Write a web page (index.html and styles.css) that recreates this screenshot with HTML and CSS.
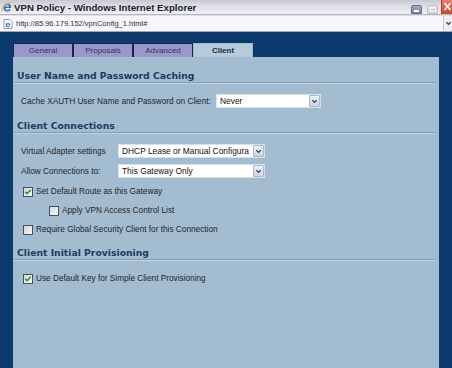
FILE: index.html
```html
<!DOCTYPE html>
<html>
<head>
<meta charset="utf-8">
<title>VPN Policy</title>
<link rel="stylesheet" href="styles.css">
</head>
<body>
<div class="window">
  <div class="titlebar">
    <svg class="ie-icon" viewBox="0 0 12 12">
      <path d="M10.2 7H4.3c.2 1.2 1 1.9 2.1 1.9.8 0 1.4-.3 1.9-.9l1.5.8c-.8 1.2-2 1.8-3.5 1.8-2.4 0-4-1.6-4-4S3.9 2.6 6.2 2.6s4 1.6 4 4zM4.4 5.6h3.7C7.9 4.7 7.2 4.1 6.2 4.1S4.6 4.7 4.4 5.6z" fill="#2f74d0"/>
      <path d="M1.2 10.5C-.2 7 5 1.6 11.2.8" stroke="#f2b630" stroke-width="1.1" fill="none"/>
    </svg>
    <span class="title">VPN Policy - Windows Internet Explorer</span>
    <div class="win-btns">
      <span class="wbtn wbtn-min"><span class="min-bar"></span></span>
      <span class="wbtn wbtn-max"><span class="max-box"></span></span>
      <span class="wbtn wbtn-close">
        <svg viewBox="0 0 11 15" class="close-x"><path d="M2.5 4l6 7M8.5 4l-6 7" stroke="#fff" stroke-width="1.6"/></svg>
      </span>
    </div>
  </div>
  <div class="addressbar">
    <svg class="page-icon" viewBox="0 0 10 10">
      <path d="M1 .5h6l2 2v7H1z" fill="#fff" stroke="#8a8a90" stroke-width=".8"/>
      <path d="M7.2 6.3H3.8c.1.7.6 1 1.2 1 .5 0 .8-.2 1.1-.5l.9.5C6.5 8 5.8 8.3 5 8.3c-1.4 0-2.3-.9-2.3-2.3S3.6 3.7 5 3.7s2.2.9 2.2 2.3zM3.8 5.5H6C5.9 4.9 5.5 4.6 5 4.6s-1.1.3-1.2.9z" fill="#2f74d0"/>
    </svg>
    <span class="url">http://85.96.179.152/vpnConfig_1.html#</span>
    <span class="addr-drop">
      <svg viewBox="0 0 8 8" class="chev"><path d="M1.5 2.5l2.5 2.5 2.5-2.5" stroke="#333" stroke-width="1.4" fill="none"/></svg>
    </span>
  </div>
  <div class="content">
    <div class="tabs">
      <div class="tab">General</div>
      <div class="tab">Proposals</div>
      <div class="tab">Advanced</div>
      <div class="tab tab-active">Client</div>
    </div>
    <div class="panel">
      <div class="section-title">User Name and Password Caching</div>
      <div class="row mt-11">
        <span class="lbl lbl-cache">Cache XAUTH User Name and Password on Client:</span>
        <div class="select sel-never"><span class="select-text">Never</span><span class="select-btn"><svg viewBox="0 0 8 8" class="chev"><path d="M1.5 2.5l2.5 2.5 2.5-2.5" stroke="#2a3550" stroke-width="1.4" fill="none"/></svg></span></div>
      </div>

      <div class="section-title mt-12">Client Connections</div>
      <div class="row mt-11">
        <span class="lbl">Virtual Adapter settings</span>
        <div class="select sel-wide"><span class="select-text">DHCP Lease or Manual Configura</span><span class="select-btn"><svg viewBox="0 0 8 8" class="chev"><path d="M1.5 2.5l2.5 2.5 2.5-2.5" stroke="#2a3550" stroke-width="1.4" fill="none"/></svg></span></div>
      </div>
      <div class="row mt-6">
        <span class="lbl">Allow Connections to:</span>
        <div class="select sel-wide"><span class="select-text">This Gateway Only</span><span class="select-btn"><svg viewBox="0 0 8 8" class="chev"><path d="M1.5 2.5l2.5 2.5 2.5-2.5" stroke="#2a3550" stroke-width="1.4" fill="none"/></svg></span></div>
      </div>
      <div class="check-row mt-7">
        <span class="cb"><svg viewBox="0 0 8 8" class="tick"><path d="M1.3 3.8l1.8 1.9 3.6-4" stroke="#2f8a2a" stroke-width="1.5" fill="none"/></svg></span>
        <span>Set Default Route as this Gateway</span>
      </div>
      <div class="check-row check-indent mt-6">
        <span class="cb"></span>
        <span>Apply VPN Access Control List</span>
      </div>
      <div class="check-row mt-6">
        <span class="cb"></span>
        <span>Require Global Security Client for this Connection</span>
      </div>

      <div class="section-title mt-11">Client Initial Provisioning</div>
      <div class="check-row mt-12">
        <span class="cb"><svg viewBox="0 0 8 8" class="tick"><path d="M1.3 3.8l1.8 1.9 3.6-4" stroke="#2f8a2a" stroke-width="1.5" fill="none"/></svg></span>
        <span>Use Default Key for Simple Client Provisioning</span>
      </div>
    </div>
  </div>
</div>
</body>
</html>
```

FILE: styles.css
```css
* { box-sizing: border-box; }
html, body { margin: 0; padding: 0; }
body {
  width: 452px;
  height: 368px;
  overflow: hidden;
  font-family: "Liberation Sans", Arial, sans-serif;
}
.window {
  display: flex;
  flex-direction: column;
  width: 452px;
  height: 368px;
}

/* title bar */
.titlebar {
  flex: none;
  height: 15px;
  display: flex;
  align-items: center;
  background: linear-gradient(#c6c7d3 0%, #dedfe7 45%, #f0f0f4 100%);
  border-bottom: 1px solid #b4b5c0;
}
.ie-icon { width: 12px; height: 12px; margin: 0 1px 0 1px; flex: none; }
.title {
  font-family: "Liberation Sans", Arial, sans-serif;
  font-weight: bold;
  font-size: 9.7px;
  color: #1e2030;
  white-space: nowrap;
}
.win-btns {
  margin-left: auto;
  display: flex;
  align-self: stretch;
  align-items: flex-end;
}
.wbtn { display: block; flex: none; }
.wbtn-min {
  width: 11px;
  height: 9px;
  margin-right: 5px;
  background: linear-gradient(#a4a8bc, #7d829c);
  border: 1px solid #6a6f88;
  border-radius: 2px 2px 0 0;
  display: flex;
  align-items: flex-end;
  justify-content: center;
}
.min-bar { width: 5px; height: 2px; background: #fff; margin-bottom: 1px; }
.wbtn-max {
  width: 11px;
  height: 9px;
  margin-right: 3px;
  background: linear-gradient(#e6e7ee, #cfd0da);
  border: 1px solid #c0c1cc;
  border-radius: 2px 2px 0 0;
  display: flex;
  align-items: center;
  justify-content: center;
}
.max-box { width: 6px; height: 5px; border: 1px solid #f4f4f8; }
.wbtn-close {
  width: 11px;
  height: 15px;
  background: linear-gradient(#e9826f, #cf4432);
  border-left: 1px solid #b03a2c;
}
.close-x { width: 11px; height: 15px; display: block; }

/* address bar */
.addressbar {
  flex: none;
  height: 17px;
  display: flex;
  align-items: center;
  padding-left: 3px;
  background: #f6f6f8;
  border-top: 1px solid #e0e0e6;
  border-bottom: 1px solid #a4a6b0;
}
.page-icon { width: 10px; height: 10px; margin-right: 3px; flex: none; }
.url {
  font-size: 7.5px;
  color: #30323c;
  white-space: nowrap;
}
.addr-drop {
  margin-left: auto;
  width: 9px;
  height: 15px;
  display: flex;
  align-items: center;
  justify-content: center;
  background: #eeeef2;
  border-left: 1px solid #c8c8d0;
}
.chev { width: 7px; height: 7px; display: block; }

/* content */
.content {
  flex: 1;
  display: flex;
  flex-direction: column;
  background: #0b3a6e;
  padding: 11px 13px 0 13px;
}
.tabs { display: flex; height: 14px; flex: none; }
.tab {
  width: 60px;
  border: 1px solid #16264a;
  border-bottom: none;
  background: #9a98ca;
  color: #2c3656;
  font-size: 8px;
  display: flex;
  align-items: center;
  justify-content: center;
}
.tab-active {
  background: #b6cbd9;
  border-color: #a2b8c9;
  color: #222a3a;
  font-weight: bold;
}
.panel {
  flex: 1;
  background: #a3bccf;
  padding: 13px 3px 0 0;
  display: flex;
  flex-direction: column;
}
.section-title {
  font-family: "DejaVu Sans", Verdana, sans-serif;
  font-weight: bold;
  font-size: 9.25px;
  line-height: 12px;
  color: #1d3a63;
  margin-left: 1px;
  padding-left: 3px;
  border-bottom: 1px solid #849eb4;
  box-shadow: 0 1px 0 #c0d2de;
  white-space: nowrap;
}
.row {
  display: flex;
  align-items: center;
  height: 14px;
  padding-left: 8px;
  font-size: 8.25px;
  color: #23262c;
}
.lbl { width: 97px; white-space: nowrap; flex: none; }
.lbl-cache { width: 195px; }
.select {
  height: 14px;
  display: flex;
  align-items: center;
  background: #fff;
  border: 1px solid #d8e0e8;
  flex: none;
}
.sel-never { width: 105px; }
.sel-wide { width: 147px; }
.select-text {
  flex: 1;
  min-width: 0;
  white-space: nowrap;
  padding-left: 3px;
  font-size: 8.4px;
  color: #111;
}
.select-btn {
  width: 11px;
  height: 12px;
  flex: none;
  display: flex;
  align-items: center;
  justify-content: center;
  background: linear-gradient(#eef2f8, #c9d4e4);
  border: 1px solid #a9b8cf;
  border-radius: 1px;
}
.check-row {
  display: flex;
  align-items: center;
  height: 13px;
  padding-left: 10px;
  font-size: 8.25px;
  color: #23262c;
  white-space: nowrap;
}
.check-indent { padding-left: 36px; }
.cb {
  width: 10px;
  height: 10px;
  flex: none;
  margin-right: 3px;
  border: 1px solid #3f5169;
  background: linear-gradient(135deg, #d6d8d2, #f8f8f4);
  display: flex;
  align-items: center;
  justify-content: center;
}
.tick { width: 8px; height: 8px; display: block; }

.mt-6 { margin-top: 6px; }
.mt-7 { margin-top: 7px; }
.mt-11 { margin-top: 11px; }
.mt-12 { margin-top: 12px; }
```
